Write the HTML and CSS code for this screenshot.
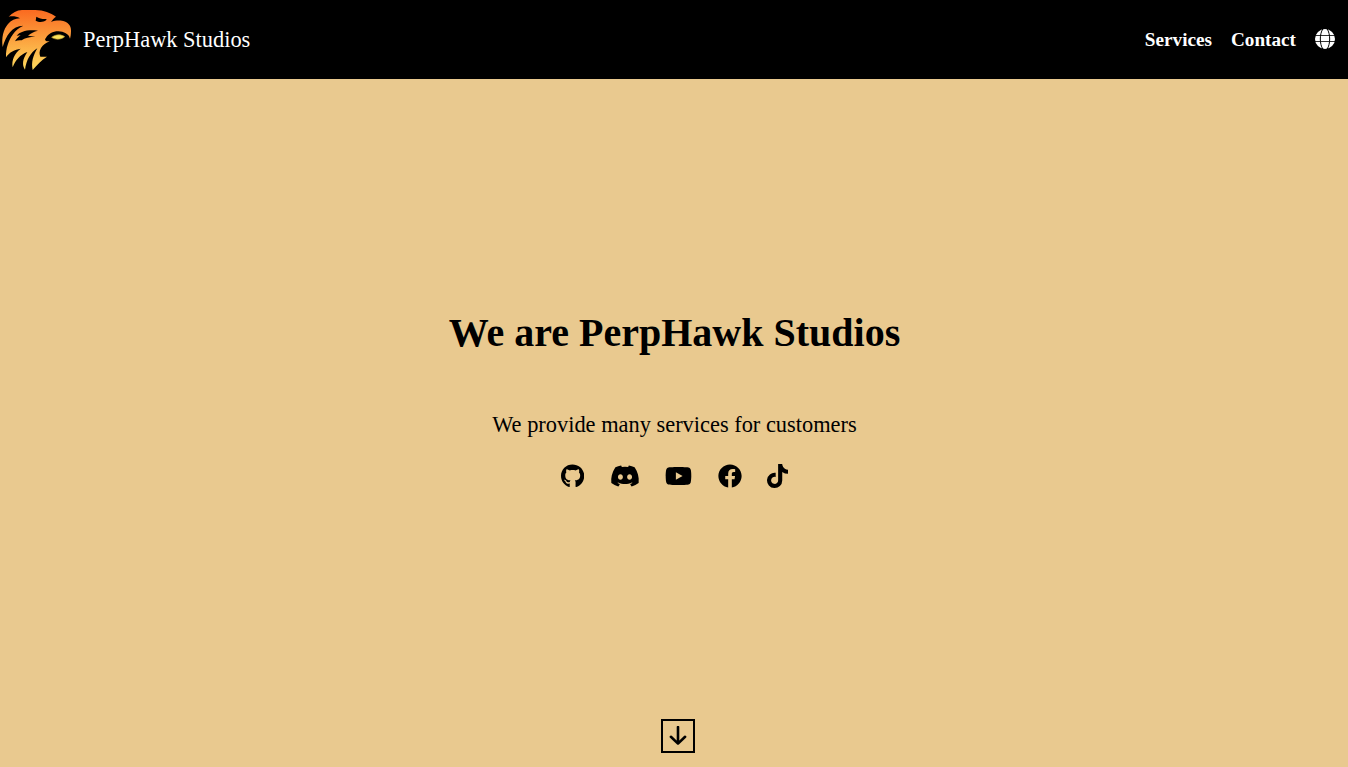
FILE: index.html
```html
<!DOCTYPE html>
<html lang="en">
<head>
<meta charset="utf-8">
<title>PerpHawk Studios</title>
<link rel="stylesheet" href="styles.css">
</head>
<body>
<header class="navbar">
  <a class="brand">
    <svg class="logo" viewBox="0 0 240 240">
      <defs><linearGradient id="flame" gradientUnits="userSpaceOnUse" x1="0" y1="30" x2="0" y2="210"><stop offset="0" stop-color="#fa6a20"/><stop offset="1" stop-color="#fddb5e"/></linearGradient></defs>
      <path fill="url(#flame)" d="M26 50C38 38 50 31 66 30H106C132 31 151 38 168 50C162 54 158 59 153 66C162 62 174 61 186 62C204 65 213 76 213 92C213 102 212 109 210 116C206 101 192 95 175 94C157 94 146 102 138 113C133 119 134 124 149 124C138 128 129 135 123 144C117 154 118 163 121 170H141C124 181 112 193 98 210C93 188 99 167 112 145C91 158 79 181 75 209C66 195 67 178 82 156C61 164 46 180 38 202C34 180 44 160 62 146C44 149 28 156 18 172C17 145 26 121 39 103C46 92 56 83 70 77C36 77 18 107 8 141C4 113 10 88 24 72C33 61 46 56 60 55C49 49 38 48 26 50Z"/>
      <path fill="#000" d="M109 50C118 56 129 58 140 57L138 61C130 67 117 68 107 62ZM45 124C49 116 55 111 62 106L50 107C61 94 83 88 114 92C101 95 93 99 84 107L106 110C89 110 74 114 65 121C58 120 51 121 45 124Z"/>
      <path fill="#fae35c" stroke="#c29b2d" stroke-width="2" d="M155 112C166 103 182 102 194 110C185 119 166 120 155 112Z"/>
    </svg>
    <span class="brand-name">PerpHawk Studios</span>
  </a>
  <nav class="links">
    <a>Services</a>
    <a>Contact</a>
    <svg class="globe" viewBox="0 0 20 20">
      <circle cx="10" cy="10" r="10"/>
      <path d="M0 6.500H20M0 12.500H20"/>
      <path class="meridians" d="M7.800 0C4.500 5 4.500 15 7.800 20M12.200 0C15.500 5 15.500 15 12.200 20"/>
    </svg>
  </nav>
</header>
<main class="hero">
  <h1 class="title">We are PerpHawk Studios</h1>
  <p class="tagline">We provide many services for customers</p>
  <div class="socials">
    <svg viewBox="0 0 496 512"><path d="M244.8 8C106.1 8 0 113.3 0 252c0 110.9 69.8 205.8 169.5 239.2 12.8 2.3 17.3-5.6 17.3-12.1 0-6.2-.3-40.4-.3-61.4 0 0-70 15-84.7-29.8 0 0-11.4-29.1-27.8-36.6 0 0-22.9-15.7 1.6-15.4 0 0 24.9 2 38.6 25.8 21.9 38.6 58.6 27.5 72.9 20.9 2.3-16 8.8-27.1 16-33.7-55.9-6.2-112.3-14.3-112.3-110.5 0-27.5 7.6-41.3 23.6-58.9-2.6-6.5-11.1-33.3 2.6-67.9 20.9-6.5 69 27 69 27 20-5.6 41.5-8.5 62.8-8.5s42.8 2.9 62.8 8.5c0 0 48.1-33.6 69-27 13.7 34.7 5.2 61.4 2.6 67.9 16 17.7 25.8 31.5 25.8 58.9 0 96.5-58.9 104.2-114.8 110.5 9.2 7.9 17 22.9 17 46.4 0 33.7-.3 75.4-.3 83.6 0 6.5 4.6 14.4 17.3 12.1C428.2 457.8 496 362.9 496 252 496 113.3 383.5 8 244.8 8z"/></svg>
    <svg viewBox="0 0 640 512"><path d="M524.531,69.836a1.5,1.5,0,0,0-.764-.7A485.065,485.065,0,0,0,404.081,32.03a1.816,1.816,0,0,0-1.923.91,337.461,337.461,0,0,0-14.9,30.6,447.848,447.848,0,0,0-134.426,0,309.541,309.541,0,0,0-15.135-30.6,1.89,1.89,0,0,0-1.924-.91A483.689,483.689,0,0,0,116.085,69.137a1.712,1.712,0,0,0-.788.676C39.068,183.651,18.186,294.69,28.43,404.354a2.016,2.016,0,0,0,.765,1.375A487.666,487.666,0,0,0,176.02,479.918a1.9,1.9,0,0,0,2.063-.676A348.2,348.2,0,0,0,208.12,430.4a1.86,1.86,0,0,0-1.019-2.588,321.173,321.173,0,0,1-45.868-21.853,1.885,1.885,0,0,1-.185-3.126c3.082-2.309,6.166-4.711,9.109-7.137a1.819,1.819,0,0,1,1.9-.256c96.229,43.917,200.41,43.917,295.5,0a1.812,1.812,0,0,1,1.924.233c2.944,2.426,6.027,4.851,9.132,7.16a1.884,1.884,0,0,1-.162,3.126,301.407,301.407,0,0,1-45.89,21.83,1.875,1.875,0,0,0-1,2.611,391.055,391.055,0,0,0,30.014,48.815,1.864,1.864,0,0,0,2.063.7A486.048,486.048,0,0,0,610.7,405.729a1.882,1.882,0,0,0,.765-1.352C623.729,277.594,590.933,167.465,524.531,69.836ZM222.491,337.58c-28.972,0-52.844-26.587-52.844-59.239S193.056,219.1,222.491,219.1c29.665,0,53.306,26.82,52.843,59.239C275.334,310.993,251.924,337.58,222.491,337.58Zm195.38,0c-28.971,0-52.843-26.587-52.843-59.239S388.437,219.1,417.871,219.1c29.667,0,53.307,26.82,52.844,59.239C470.715,310.993,447.538,337.58,417.871,337.58Z"/></svg>
    <svg viewBox="0 0 576 512"><path d="M549.655 124.083c-6.281-23.65-24.787-42.276-48.284-48.597C458.781 64 288 64 288 64S117.22 64 74.629 75.486c-23.497 6.322-42.003 24.947-48.284 48.597-11.412 42.867-11.412 132.305-11.412 132.305s0 89.438 11.412 132.305c6.281 23.65 24.787 41.5 48.284 47.821C117.22 448 288 448 288 448s170.78 0 213.371-11.486c23.497-6.321 42.003-24.171 48.284-47.821 11.412-42.867 11.412-132.305 11.412-132.305s0-89.438-11.412-132.305zm-317.51 213.508V175.185l142.739 81.205-142.739 81.201z"/></svg>
    <svg viewBox="0 0 512 512"><path d="M504 256C504 119 393 8 256 8S8 119 8 256c0 123.78 90.69 226.38 209.25 245V327.69h-63V256h63v-54.64c0-62.15 37-96.48 93.67-96.48 27.14 0 55.52 4.84 55.52 4.84v61h-31.28c-30.8 0-40.41 19.12-40.41 38.73V256h68.78l-11 71.69h-57.78V501C413.31 482.38 504 379.78 504 256z"/></svg>
    <svg viewBox="0 0 448 512"><path d="M448,209.91a210.06,210.06,0,0,1-122.77-39.25V349.38A162.55,162.55,0,1,1,185,188.31V278.2a74.62,74.62,0,1,0,52.23,71.18V0l88,0a121.18,121.18,0,0,0,1.86,22.17h0A122.18,122.18,0,0,0,381,102.39a121.43,121.43,0,0,0,67,20.14Z"/></svg>
  </div>
  <a class="scroll-down">
    <svg viewBox="0 0 20 20"><path d="M10 1V17.500M2.900 10.800L10 17.600L17.100 10.800"/></svg>
  </a>
</main>
</body>
</html>
```
FILE: styles.css
```css
* { box-sizing: border-box; }
body {
  margin: 0;
  height: 100vh;
  display: flex;
  flex-direction: column;
  overflow: hidden;
  background: #e9c98f;
  color: #000;
  font-family: "Liberation Serif", "Times New Roman", serif;
}
.navbar {
  flex: none;
  height: 79px;
  display: flex;
  justify-content: space-between;
  align-items: center;
  padding-right: 13px;
  background: #000;
  color: #fff;
}
.brand { display: flex; align-items: center; gap: 3px; }
.logo { width: 80px; height: 80px; flex: none; }
.brand-name { font-size: 22.4px; line-height: 26px; }
.links {
  display: flex;
  align-items: center;
  gap: 19px;
  padding-top: 1px;
  font-size: 19.2px;
  font-weight: bold;
}
.globe {
  width: 20px;
  height: 20px;
  margin-top: -3px;
  overflow: hidden;
  fill: #fff;
}
.globe path { fill: none; stroke: #000; stroke-width: 0.8; }
.globe .meridians { stroke-width: 1; }
.hero {
  flex: 1;
  display: flex;
  flex-direction: column;
  align-items: center;
  padding: 230px 0 14px;
}
.title {
  margin: 0 0 0 1px;
  font-size: 40px;
  line-height: 48px;
}
.tagline {
  margin: 55px 0 0 1px;
  font-size: 22.4px;
  line-height: 26px;
}
.socials { display: flex; gap: 25.5px; margin: 26px 0 0 1px; }
.socials svg { height: 24px; width: auto; display: block; }
.scroll-down {
  width: 34px;
  height: 34px;
  margin: auto 0 0 8px;
  display: flex;
  align-items: center;
  justify-content: center;
  border: 2px solid #000;
}
.scroll-down svg {
  width: 20px;
  height: 20px;
  margin-top: -1px;
  fill: none;
  stroke: #000;
  stroke-width: 2.6;
  stroke-linecap: round;
  stroke-linejoin: round;
}
```
